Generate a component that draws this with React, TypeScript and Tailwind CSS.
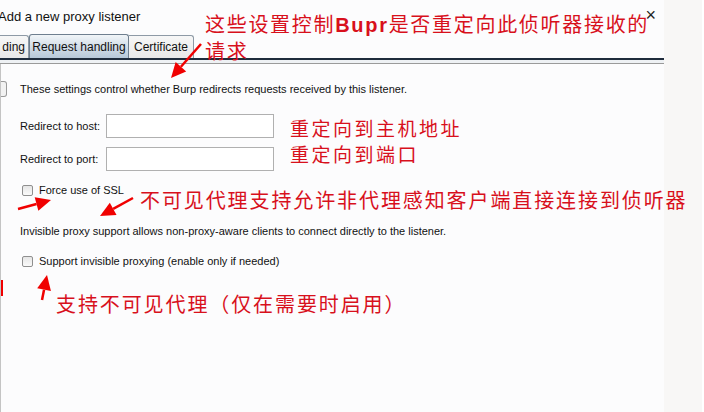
import React from 'react';

const ui = { fontFamily: '"Liberation Sans", Arial, sans-serif' };
const cn = { fontFamily: '"Noto Sans CJK SC", "Noto Sans", sans-serif' };

const Checkbox = () => (
  <span className="inline-block shrink-0 w-[11px] h-[11px] rounded-[2px] border border-[#8f8f8f] bg-gradient-to-b from-[#e6e6e6] to-[#fafafa]" />
);

const Arrow = ({ x1, y1, x2, y2 }: { x1: number; y1: number; x2: number; y2: number }) => {
  const a = Math.atan2(y2 - y1, x2 - x1);
  const len = 15;
  const w = 7;
  const bx = x2 - len * Math.cos(a);
  const by = y2 - len * Math.sin(a);
  const px = -Math.sin(a) * w;
  const py = Math.cos(a) * w;
  return (
    <g>
      <line x1={x1} y1={y1} x2={bx} y2={by} stroke="#f00000" strokeWidth={2.5} />
      <polygon points={`${x2},${y2} ${bx + px},${by + py} ${bx - px},${by - py}`} fill="#f00000" />
    </g>
  );
};

export default function App() {
  return (
    <div className="relative w-[704px] h-[412px] flex bg-white overflow-hidden" style={ui}>
      {/* dialog */}
      <div className="w-[664px] h-full flex flex-col bg-[#fcfcfd]">
        <div className="h-[34px] flex items-start justify-between pt-[7px]">
          <span className="ml-[-2px] text-[13px] text-[#111] whitespace-nowrap">Add a new proxy listener</span>
          <span className="mr-[8px] mt-[-1px] text-[18px] leading-none font-light text-[#222]">×</span>
        </div>

        {/* tabs */}
        <div className="h-[24px] flex items-end text-[12px] text-[#111]">
          <div className="h-[23px] w-[29px] flex items-center justify-end pr-[3px] border border-l-0 border-b-0 border-[#8e9aa6] rounded-tr-[3px] bg-gradient-to-b from-[#f7f7f7] to-[#e8e8e8]">
            ding
          </div>
          <div className="h-[24px] w-[100px] flex items-center justify-center border border-b-0 border-[#6f7f8f] rounded-t-[3px] bg-gradient-to-b from-[#f1f5f8] to-[#b7c8d8]">
            Request handling
          </div>
          <div className="h-[23px] w-[65px] flex items-center justify-center border border-l-0 border-b-0 border-[#8e9aa6] rounded-tr-[3px] bg-gradient-to-b from-[#f7f7f7] to-[#e8e8e8]">
            Certificate
          </div>
        </div>
        <div className="h-[2px] bg-[#1f2c3c]" />
        <div className="h-[3px] bg-[#eef1f4]" />
        <div className="h-[1px] bg-[#9a9a9a]" />

        {/* content */}
        <div className="flex-1 flex border-l border-[#c4c4c4] text-[11px] text-[#111]">
          <div className="w-[6px] shrink-0 pt-[17px]">
            <div className="h-[16px] w-[6px] border border-l-0 border-[#9a9a9a] rounded-r-[3px] bg-[#f2f2f2]" />
          </div>
          <div className="flex flex-col pl-[13px] pt-[19px]">
            <p className="leading-[13px] whitespace-nowrap">These settings control whether Burp redirects requests received by this listener.</p>
            <div className="mt-[18px] flex items-center gap-[6px]">
              <span className="w-[80px] shrink-0 whitespace-nowrap">Redirect to host:</span>
              <div className="w-[168px] h-[24px] border border-[#b0b0b0] bg-white" />
            </div>
            <div className="mt-[9px] flex items-center gap-[6px]">
              <span className="w-[80px] shrink-0 whitespace-nowrap">Redirect to port:</span>
              <div className="w-[168px] h-[24px] border border-[#b0b0b0] bg-white" />
            </div>
            <label className="mt-[13px] ml-[2px] flex items-center gap-[6px] h-[13px]">
              <Checkbox />
              <span className="whitespace-nowrap">Force use of SSL</span>
            </label>
            <p className="mt-[28px] leading-[13px] whitespace-nowrap">Invisible proxy support allows non-proxy-aware clients to connect directly to the listener.</p>
            <label className="mt-[17px] ml-[2px] flex items-center gap-[6px] h-[13px]">
              <Checkbox />
              <span className="whitespace-nowrap">Support invisible proxying (enable only if needed)</span>
            </label>
          </div>
        </div>
      </div>
      <div className="w-[38px] h-full bg-[#f8f7f6]" />

      {/* annotations */}
      <div className="absolute left-[205px] top-[11px] text-[20px] leading-[26px] text-[#d8101c]" style={cn}>
        <div className="tracking-[1.7px] whitespace-nowrap">
          这些设置控制<span className="font-bold" style={ui}>Bupr</span>是否重定向此侦听器接收的
        </div>
        <div className="tracking-[1.7px]">请求</div>
      </div>
      <div className="absolute left-[290px] top-[115px] text-[19px] leading-[26px] tracking-[2.5px] text-[#d8101c]" style={cn}>
        <div>重定向到主机地址</div>
        <div>重定向到端口</div>
      </div>
      <div className="absolute left-[140px] top-[187px] text-[20px] leading-[26px] tracking-[1.9px] whitespace-nowrap text-[#d8101c]" style={cn}>
        不可见代理支持允许非代理感知客户端直接连接到侦听器
      </div>
      <div className="absolute left-[56px] top-[291px] text-[20px] leading-[26px] tracking-[1.9px] whitespace-nowrap text-[#d8101c]" style={cn}>
        支持不可见代理（仅在需要时启用）
      </div>
      <svg className="absolute left-0 top-0 pointer-events-none" width={704} height={412}>
        <Arrow x1={201} y1={44} x2={171} y2={78} />
        <Arrow x1={133} y1={198} x2={100} y2={216} />
        <Arrow x1={18} y1={209} x2={51} y2={200} />
        <Arrow x1={42} y1={300} x2={47} y2={275} />
        <line x1={2} y1={280} x2={2} y2={296} stroke="#f00000" strokeWidth={2} />
      </svg>
    </div>
  );
}
